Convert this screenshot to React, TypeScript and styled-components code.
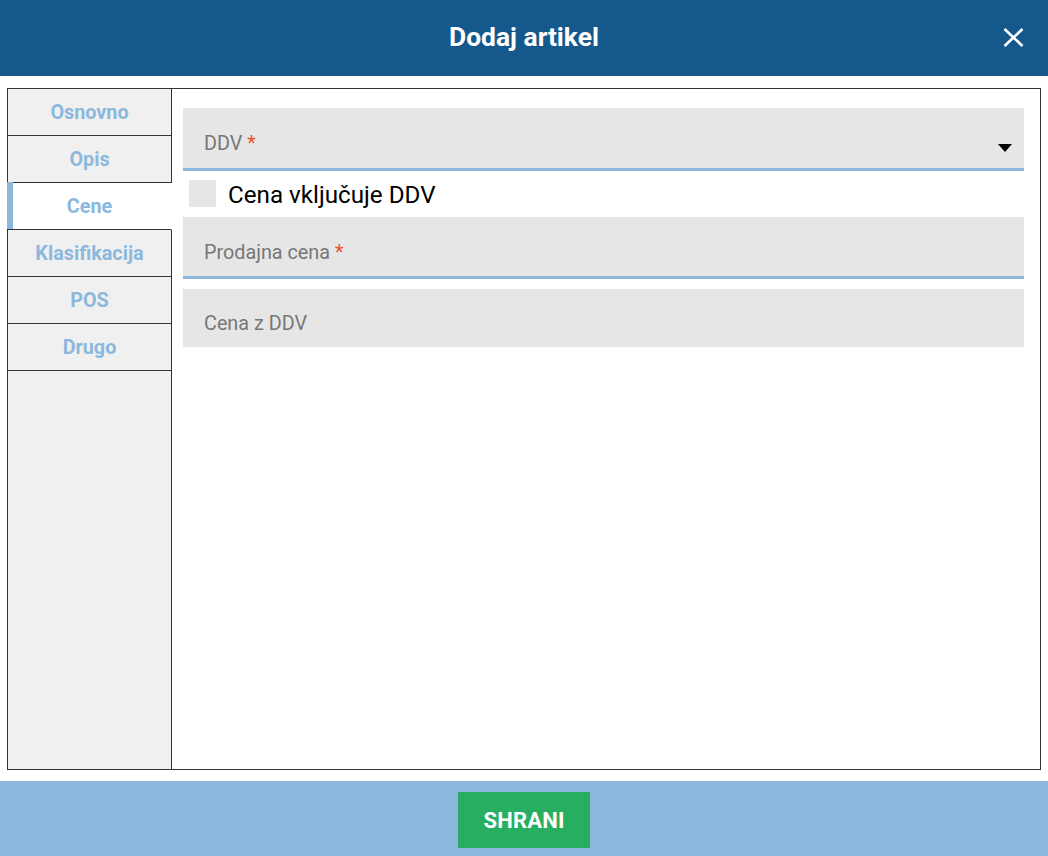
import React, { useState } from "react";
import styled, { createGlobalStyle } from "styled-components";

const GlobalStyle = createGlobalStyle`
  * { box-sizing: border-box; }
  html, body { margin: 0; padding: 0; background: #ffffff; }
  body { font-family: Roboto, "Liberation Sans", Arial, sans-serif; }
`;

const Page = styled.div`
  width: 1048px;
  height: 856px;
  display: flex;
  flex-direction: column;
  background: #ffffff;
`;

const Header = styled.header`
  height: 76px;
  flex: none;
  background: #15588b;
  display: flex;
  align-items: center;
  justify-content: center;
  position: relative;
`;

const Title = styled.h1`
  margin: 0;
  color: #ffffff;
  font-size: 26.4px;
  font-weight: 700;
  line-height: 1;
  padding-bottom: 2px;
`;

const CloseButton = styled.button`
  position: absolute;
  right: 24px;
  top: 26px;
  width: 22px;
  height: 22px;
  padding: 0;
  border: none;
  background: transparent;
  cursor: pointer;
  display: flex;
  align-items: center;
  justify-content: center;
`;

const Body = styled.main`
  flex: 1;
  padding: 12px 7px 11px 7px;
  display: flex;
`;

const Frame = styled.div`
  flex: 1;
  border: 1px solid #333333;
  display: flex;
`;

const Sidebar = styled.nav`
  width: 164px;
  flex: none;
  display: flex;
  flex-direction: column;
`;

const Tab = styled.button<{ $active?: boolean }>`
  position: relative;
  height: 47px;
  flex: none;
  border: none;
  border-bottom: 1px solid #333333;
  border-right: 1px solid ${(p) => (p.$active ? "#ffffff" : "#333333")};
  background: ${(p) => (p.$active ? "#ffffff" : "#f0f0f0")};
  color: #8cb8dd;
  font-family: Roboto, "Liberation Sans", Arial, sans-serif;
  font-size: 19.8px;
  font-weight: 700;
  padding: 1px 0 0 0;
  display: flex;
  align-items: center;
  justify-content: center;
  cursor: pointer;

  &::before {
    content: "";
    display: ${(p) => (p.$active ? "block" : "none")};
    position: absolute;
    left: -1px;
    top: -1px;
    bottom: 0;
    width: 6px;
    background: #8cb8dd;
  }
`;

const SidebarFill = styled.div`
  flex: 1;
  background: #f0f0f0;
  border-right: 1px solid #333333;
`;

const Content = styled.section`
  flex: 1;
  padding: 19px 16px 0 11px;
  display: flex;
  flex-direction: column;
`;

const Field = styled.div<{ $underline?: boolean; $h: number }>`
  position: relative;
  height: ${(p) => p.$h}px;
  flex: none;
  background: #e6e6e6;
  border-bottom: ${(p) => (p.$underline ? "3px solid #8cb8dd" : "none")};
  display: flex;
  align-items: flex-end;
  padding: 0 12px 0 21px;
`;

const Label = styled.span<{ $pb: number }>`
  color: #777777;
  font-size: 19.8px;
  line-height: 20px;
  padding-bottom: ${(p) => p.$pb}px;
  flex: 1;
`;

const Star = styled.span`
  color: #e8532b;
`;

const Arrow = styled.span`
  width: 0;
  height: 0;
  border-left: 7px solid transparent;
  border-right: 7px solid transparent;
  border-top: 8px solid #000000;
  margin-bottom: 16px;
`;

const CheckRow = styled.label`
  height: 46px;
  flex: none;
  display: flex;
  align-items: center;
  gap: 12px;
  padding: 9px 0 10px 6px;
  cursor: pointer;
`;

const CheckBox = styled.span`
  width: 27px;
  height: 27px;
  background: #e6e6e6;
  flex: none;
`;

const CheckText = styled.span`
  font-size: 24.2px;
  color: #000000;
  line-height: 27px;
  padding-top: 4px;
`;

const Gap = styled.div`
  height: 10px;
  flex: none;
`;

const Footer = styled.footer`
  height: 75px;
  flex: none;
  background: #8cb8dd;
  display: flex;
  justify-content: center;
  padding-top: 11px;
`;

const SaveButton = styled.button`
  width: 132px;
  height: 56px;
  border: none;
  background: #27ae60;
  color: #ffffff;
  font-family: Roboto, "Liberation Sans", Arial, sans-serif;
  font-size: 22px;
  font-weight: 700;
  letter-spacing: 0.2px;
  cursor: pointer;
`;

const tabs = ["Osnovno", "Opis", "Cene", "Klasifikacija", "POS", "Drugo"];

export default function App() {
  const [active, setActive] = useState("Cene");
  return (
    <>
      <GlobalStyle />
      <Page>
        <Header>
          <Title>Dodaj artikel</Title>
          <CloseButton aria-label="Zapri">
            <svg width="21" height="19" viewBox="0 0 21 19">
              <path d="M1.5 1 L19.5 18 M19.5 1 L1.5 18" stroke="#ffffff" strokeWidth="2.6" fill="none" />
            </svg>
          </CloseButton>
        </Header>
        <Body>
          <Frame>
            <Sidebar>
              {tabs.map((t) => (
                <Tab key={t} $active={t === active} onClick={() => setActive(t)}>
                  {t}
                </Tab>
              ))}
              <SidebarFill />
            </Sidebar>
            <Content>
              <Field $underline $h={63}>
                <Label $pb={14}>
                  DDV <Star>*</Star>
                </Label>
                <Arrow />
              </Field>
              <CheckRow>
                <CheckBox />
                <CheckText>Cena vključuje DDV</CheckText>
              </CheckRow>
              <Field $underline $h={62}>
                <Label $pb={13}>
                  Prodajna cena <Star>*</Star>
                </Label>
              </Field>
              <Gap />
              <Field $h={58}>
                <Label $pb={13}>Cena z DDV</Label>
              </Field>
            </Content>
          </Frame>
        </Body>
        <Footer>
          <SaveButton>SHRANI</SaveButton>
        </Footer>
      </Page>
    </>
  );
}
